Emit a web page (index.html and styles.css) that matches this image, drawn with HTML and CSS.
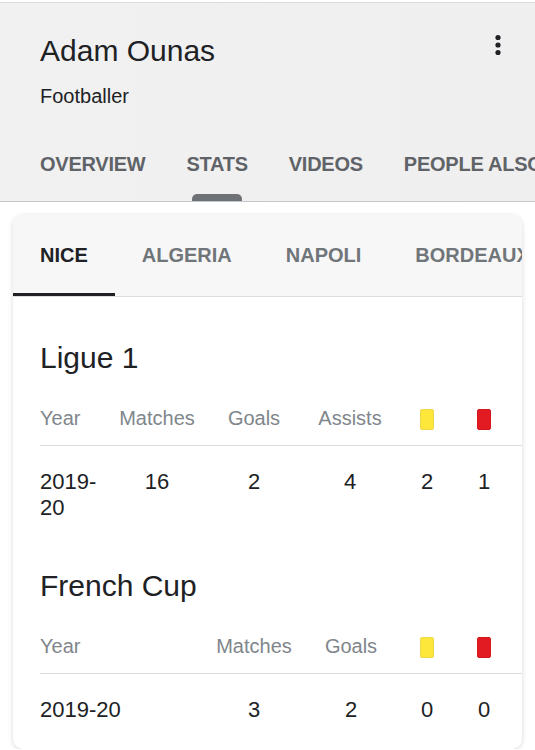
FILE: index.html
```html
<!DOCTYPE html>
<html lang="en">
<head>
    <meta charset="UTF-8">
    <meta name="viewport" content="width=device-width, initial-scale=1.0">
    <title>Adam Ounas - Stats</title>
    <link rel="stylesheet" href="styles.css">
</head>
<body>
    <div class="header">
        <div class="title-row">
            <div>
                <h1 class="name">Adam Ounas</h1>
                <div class="subtitle">Footballer</div>
            </div>
            <svg class="kebab" width="24" height="24" viewBox="0 0 24 24">
                <circle cx="12" cy="4.5" r="2.6" fill="#202124"/>
                <circle cx="12" cy="12" r="2.6" fill="#202124"/>
                <circle cx="12" cy="19.5" r="2.6" fill="#202124"/>
            </svg>
        </div>
        <div class="top-tabs">
            <div class="top-tab">OVERVIEW</div>
            <div class="top-tab active">STATS<span class="indicator"></span></div>
            <div class="top-tab">VIDEOS</div>
            <div class="top-tab">PEOPLE ALSO SEARCH FOR</div>
        </div>
    </div>

    <div class="card">
        <div class="club-tabs">
            <div class="club-tab active">NICE</div>
            <div class="club-tab">ALGERIA</div>
            <div class="club-tab">NAPOLI</div>
            <div class="club-tab">BORDEAUX</div>
        </div>

        <div class="card-body">
            <div class="competition">
                <h2 class="comp-title">Ligue 1</h2>
                <table class="stats league">
                    <colgroup>
                        <col class="c-year">
                        <col class="c-matches">
                        <col class="c-goals">
                        <col class="c-assists">
                        <col class="c-yellow">
                        <col class="c-red">
                    </colgroup>
                    <thead>
                        <tr>
                            <th class="year">Year</th>
                            <th>Matches</th>
                            <th>Goals</th>
                            <th>Assists</th>
                            <th><span class="booking yellow"></span></th>
                            <th class="last"><span class="booking red"></span></th>
                        </tr>
                    </thead>
                    <tbody>
                        <tr>
                            <td class="year">2019-20</td>
                            <td>16</td>
                            <td>2</td>
                            <td>4</td>
                            <td>2</td>
                            <td class="last">1</td>
                        </tr>
                    </tbody>
                </table>
            </div>

            <div class="competition">
                <h2 class="comp-title">French Cup</h2>
                <table class="stats cup">
                    <colgroup>
                        <col class="c-year">
                        <col class="c-matches">
                        <col class="c-goals">
                        <col class="c-yellow">
                        <col class="c-red">
                    </colgroup>
                    <thead>
                        <tr>
                            <th class="year">Year</th>
                            <th>Matches</th>
                            <th>Goals</th>
                            <th><span class="booking yellow"></span></th>
                            <th class="last"><span class="booking red"></span></th>
                        </tr>
                    </thead>
                    <tbody>
                        <tr>
                            <td class="year">2019-20</td>
                            <td>3</td>
                            <td>2</td>
                            <td>0</td>
                            <td class="last">0</td>
                        </tr>
                    </tbody>
                </table>
            </div>
        </div>
    </div>
</body>
</html>
```

FILE: styles.css
```css
body {
    font-family: "Liberation Sans", Arial, sans-serif;
    margin: 0;
    padding: 0;
    background: #fff;
    color: #202124;
    overflow: hidden;
}

/* Header */
.header {
    margin-top: 2px;
    border-top: 1px solid #dcdcdc;
    border-bottom: 1px solid #c4c7cc;
    background: linear-gradient(to right, #f1f1f1, #efefef);
    padding-left: 40px;
    overflow: hidden;
}

.title-row {
    display: flex;
    justify-content: space-between;
    align-items: flex-start;
    padding: 30px 25px 0 0;
}

.name {
    margin: 0;
    font-size: 30px;
    line-height: 36px;
    font-weight: 400;
    color: #202124;
}

.subtitle {
    margin-top: 15px;
    font-size: 20px;
    line-height: 24px;
}

.kebab {
    display: block;
}

.top-tabs {
    display: flex;
    gap: 41px;
    margin-top: 44px;
    white-space: nowrap;
}

.top-tab {
    display: flex;
    flex-direction: column;
    align-items: center;
    font-size: 20px;
    line-height: 24px;
    font-weight: 700;
    letter-spacing: -0.25px;
    color: #5f6368;
    padding-bottom: 25px;
}

.top-tab.active {
    padding-bottom: 0;
}

.indicator {
    display: block;
    width: 50px;
    height: 7px;
    margin-top: 18px;
    background: #6e7277;
    border-radius: 5px 5px 0 0;
}

/* Card */
.card {
    margin: 13px 13px 0;
    background: #fff;
    border-radius: 10px;
    box-shadow: 0 1px 5px rgba(0, 0, 0, 0.16);
    overflow: hidden;
}

.club-tabs {
    display: flex;
    background: #f7f7f7;
    border-bottom: 1px solid #dedede;
    white-space: nowrap;
}

.club-tab {
    padding: 28px 27px 26px;
    font-size: 20px;
    line-height: 24px;
    font-weight: 700;
    color: #70757a;
    border-bottom: 3px solid transparent;
}

.club-tab.active {
    color: #202124;
    border-bottom-color: #202124;
}

.card-body {
    padding: 43px 0 26px 27px;
}

.competition + .competition {
    margin-top: 47px;
}

.comp-title {
    margin: 0;
    font-size: 30px;
    line-height: 36px;
    font-weight: 400;
    color: #202124;
}

/* Stats tables */
.stats {
    margin-top: 30px;
    width: 482px;
    table-layout: fixed;
    border-collapse: collapse;
}

.stats th {
    font-size: 20px;
    line-height: 24px;
    font-weight: 400;
    color: #80868b;
    text-align: center;
    padding: 0 0 15px;
    border-bottom: 1px solid #dadce0;
    white-space: nowrap;
}

.stats td {
    font-size: 22px;
    line-height: 26px;
    text-align: center;
    padding: 23px 0 0;
    vertical-align: top;
    color: #202124;
}

.stats .year {
    text-align: left;
}

.league .c-year { width: 64px; }
.league .c-matches { width: 106px; }
.league .c-goals { width: 88px; }
.league .c-assists { width: 104px; }
.league .c-yellow { width: 50px; }
.league .c-red { width: 70px; }
.league .last { padding-right: 6px; }

.cup .c-year { width: 166px; }
.cup .c-matches { width: 96px; }
.cup .c-goals { width: 98px; }
.cup .c-yellow { width: 54px; }
.cup .c-red { width: 68px; }
.cup .last { padding-right: 8px; }

.booking {
    display: inline-block;
    width: 14px;
    height: 21px;
    border-radius: 2px;
    vertical-align: middle;
    box-sizing: border-box;
}

.booking.yellow {
    background: #fde73a;
    border: 1px solid #efd84a;
}

.booking.red {
    background: #e21b23;
    border: 1px solid #d5171e;
}
```
